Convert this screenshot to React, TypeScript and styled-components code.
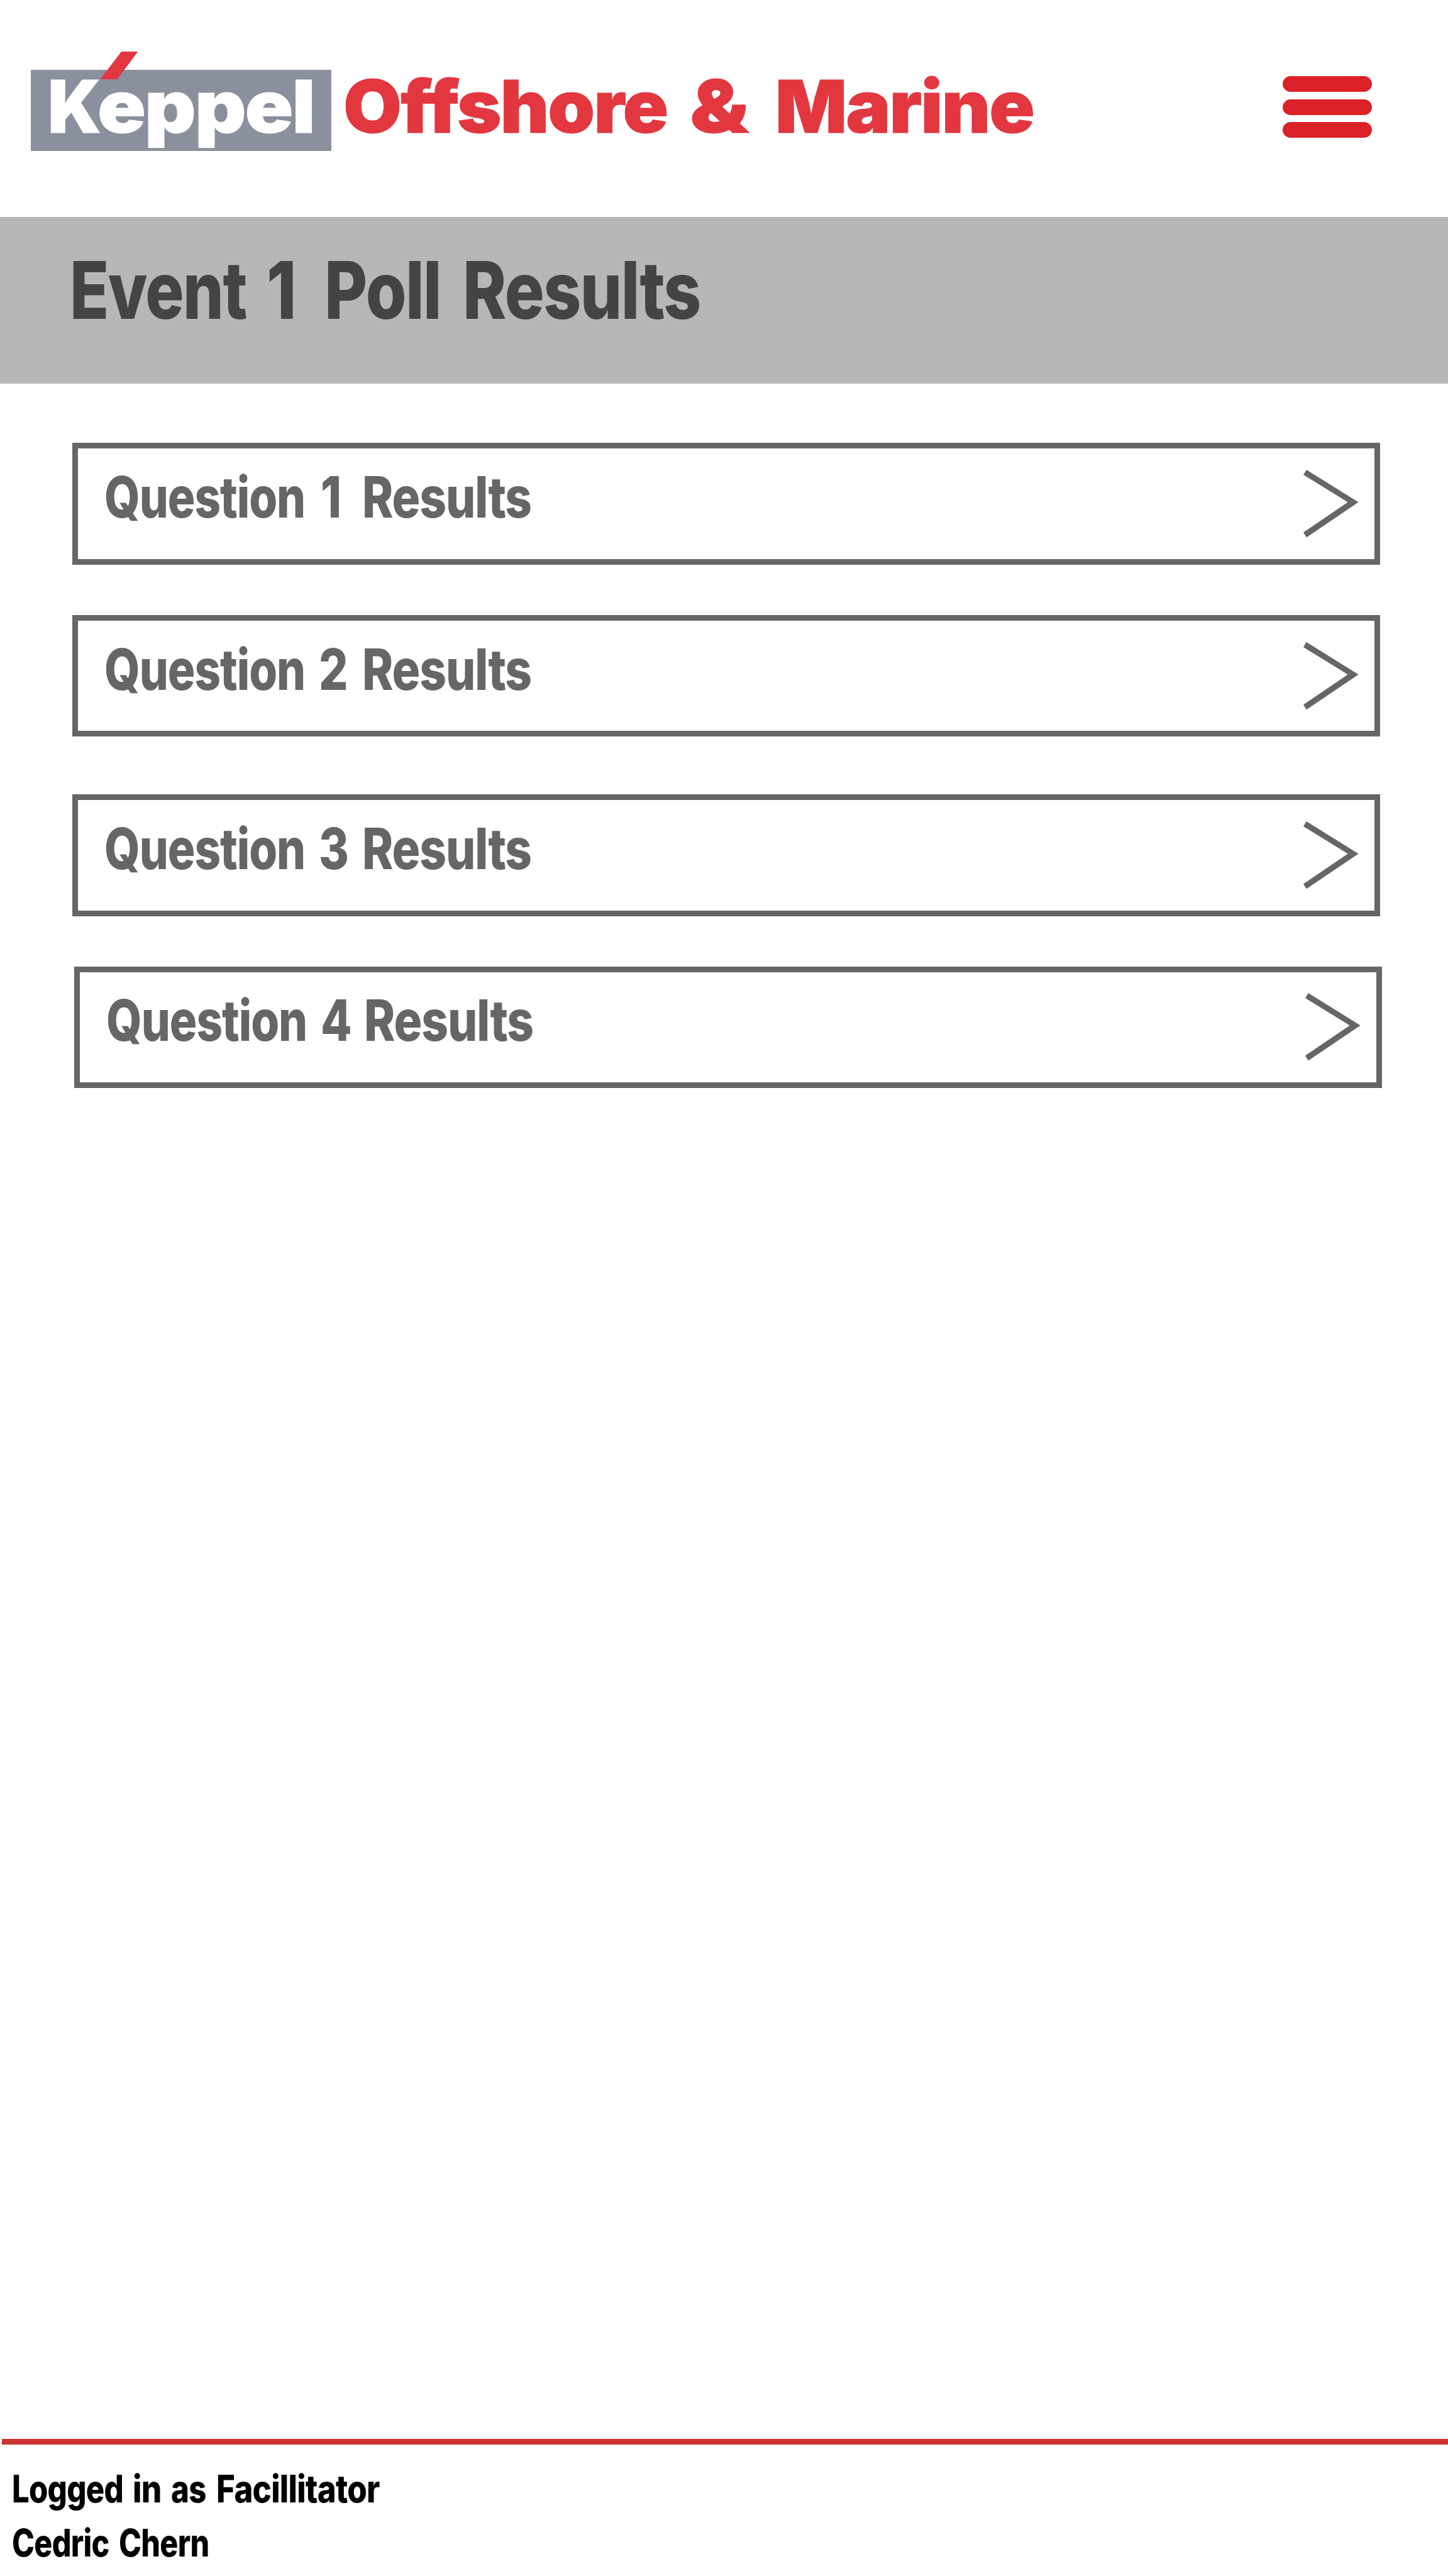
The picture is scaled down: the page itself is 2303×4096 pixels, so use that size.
import React from "react";
import styled, { createGlobalStyle } from "styled-components";

const GlobalStyle = createGlobalStyle`
  *, *::before, *::after { box-sizing: border-box; }
  body { margin: 0; background: #fff; }
  h1, p { margin: 0; font: inherit; }
`;

const Page = styled.div`
  display: flex;
  flex-direction: column;
  width: 2303px;
  height: 4096px;
  overflow: hidden;
  background: #fff;
  font-family: Inter, "Liberation Sans", Arial, sans-serif;
  font-weight: 800;
`;

/* A word with its own horizontal stretch; $pitch is the distance to the next word. */
const Word = styled.span<{ $stretch: number; $pitch?: number }>`
  display: block;
  flex: none;
  width: ${(p) => (p.$pitch ? `${p.$pitch}px` : "auto")};
  white-space: pre;
  transform: scaleX(${(p) => p.$stretch});
  transform-origin: 0 0;
`;

const Header = styled.header`
  display: flex;
  justify-content: space-between;
  align-items: flex-start;
  height: 344.5px;
  flex: none;
  padding: 110.5px 121.3px 0 49.2px;
`;

const Brand = styled.div`
  display: flex;
  align-items: flex-start;
  font-size: 116px;
  line-height: 116px;
  font-weight: 900;
  letter-spacing: -2px;
  -webkit-text-stroke: 0.8px currentColor;
`;

const KeppelBadge = styled.div`
  position: relative;
  display: flex;
  width: 477.4px;
  height: 129.8px;
  padding-left: 27px;
  background: #8b909e;
  color: #fff;
`;

const Slash = styled.svg`
  position: absolute;
  left: 110px;
  top: -28.7px;
  width: 61px;
  height: 44.2px;
  fill: #e2373f;
`;

const Division = styled.div`
  display: flex;
  margin-left: 19.5px;
  color: #e2373f;
`;

const MenuButton = styled.button`
  display: flex;
  flex-direction: column;
  gap: 11.8px;
  width: 142px;
  margin-top: 10.4px;
  padding: 0;
  border: 0;
  background: none;
`;

const MenuBar = styled.span`
  display: block;
  height: 25px;
  border-radius: 12.5px;
  background: #da2128;
`;

const TitleBand = styled.section`
  flex: none;
  height: 265.7px;
  padding: 53.6px 0 0 111.3px;
  background: #b7b7b7;
`;

const Title = styled.h1`
  display: flex;
  color: #444;
  font-size: 127px;
  line-height: 127px;
  font-weight: 800;
  letter-spacing: -0.015em;
`;

const List = styled.main`
  display: flex;
  flex-direction: column;
  flex: 1;
  padding: 94.3px 0 0 115px;
`;

const Row = styled.a<{ $gap: number; $indent?: number }>`
  display: flex;
  justify-content: space-between;
  flex: none;
  width: 2080px;
  height: 193.5px;
  margin: 0 0 ${(p) => p.$gap}px ${(p) => p.$indent ?? 0}px;
  padding: 32.6px 25px 0 41.5px;
  border: 9px solid #666;
  color: #666;
`;

const RowLabel = styled.span`
  display: flex;
  font-size: 90.2px;
  line-height: 90px;
  letter-spacing: -0.015em;
`;

const Chevron = styled.svg`
  width: 87.6px;
  height: 107.4px;
  margin-top: 1.1px;
  fill: #666;
`;

const Footer = styled.footer`
  flex: none;
  height: 218px;
  margin-left: 3px;
  padding: 27.4px 0 0 15.6px;
  border-top: 9px solid #c33;
  color: #000;
`;

const FooterLine = styled.p`
  display: flex;
  font-size: 59.8px;
  line-height: 86px;
  letter-spacing: -0.015em;
`;

const questions = [
  { id: "1", stretch: 0.833, shift: 3.5, gap: 80, indent: 0 },
  { id: "2", stretch: 0.81, shift: 0, gap: 91.8, indent: 0 },
  { id: "3", stretch: 0.81, shift: 0, gap: 80, indent: 0 },
  { id: "4", stretch: 0.8, shift: 0, gap: 0, indent: 3 },
];

export default function App() {
  return (
    <>
      <GlobalStyle />
      <Page>
        <Header>
          <Brand>
            <KeppelBadge>
              <Word $stretch={0.965} $pitch={79.3}>K</Word>
              <Word $stretch={1.095}>eppel</Word>
              <Slash viewBox="0 0 61 44.2">
                <polygon points="34.1,0 60.4,0 27.3,44.2 0.2,44.2" />
              </Slash>
            </KeppelBadge>
            <Division>
              <Word $stretch={1.034} $pitch={551.1}>{"Offshore "}</Word>
              <Word $stretch={1.165} $pitch={135.9}>{"& "}</Word>
              <Word $stretch={1.031}>Marine</Word>
            </Division>
          </Brand>
          <MenuButton aria-label="Menu">
            <MenuBar />
            <MenuBar />
            <MenuBar />
          </MenuButton>
        </Header>

        <TitleBand>
          <Title>
            <Word $stretch={0.804} $pitch={312.5}>{"Event "}</Word>
            <Word $stretch={0.85} $pitch={92.6}>{"1 "}</Word>
            <Word $stretch={0.825} $pitch={219.3}>{"Poll "}</Word>
            <Word $stretch={0.826}>Results</Word>
          </Title>
        </TitleBand>

        <List>
          {questions.map((q) => (
            <Row key={q.id} $gap={q.gap} $indent={q.indent}>
              <RowLabel>
                <Word $stretch={0.806} $pitch={341 + q.shift}>{"Question "}</Word>
                <Word $stretch={q.stretch} $pitch={69 - q.shift}>{q.id + " "}</Word>
                <Word $stretch={0.828}>Results</Word>
              </RowLabel>
              <Chevron viewBox="0 0 87.6 107.4">
                <polygon points="0,7.9 4.9,0 87.6,51.4 4.9,107.4 0,99.4 70.7,51.4" />
              </Chevron>
            </Row>
          ))}
        </List>

        <Footer>
          <FooterLine>
            <Word $stretch={0.82} $pitch={192.4}>{"Logged "}</Word>
            <Word $stretch={0.859} $pitch={60.6}>{"in "}</Word>
            <Word $stretch={0.821} $pitch={72.3}>{"as "}</Word>
            <Word $stretch={0.852}>Facillitator</Word>
          </FooterLine>
          <FooterLine>
            <Word $stretch={0.81} $pitch={170.5}>{"Cedric "}</Word>
            <Word $stretch={0.81}>Chern</Word>
          </FooterLine>
        </Footer>
      </Page>
    </>
  );
}
